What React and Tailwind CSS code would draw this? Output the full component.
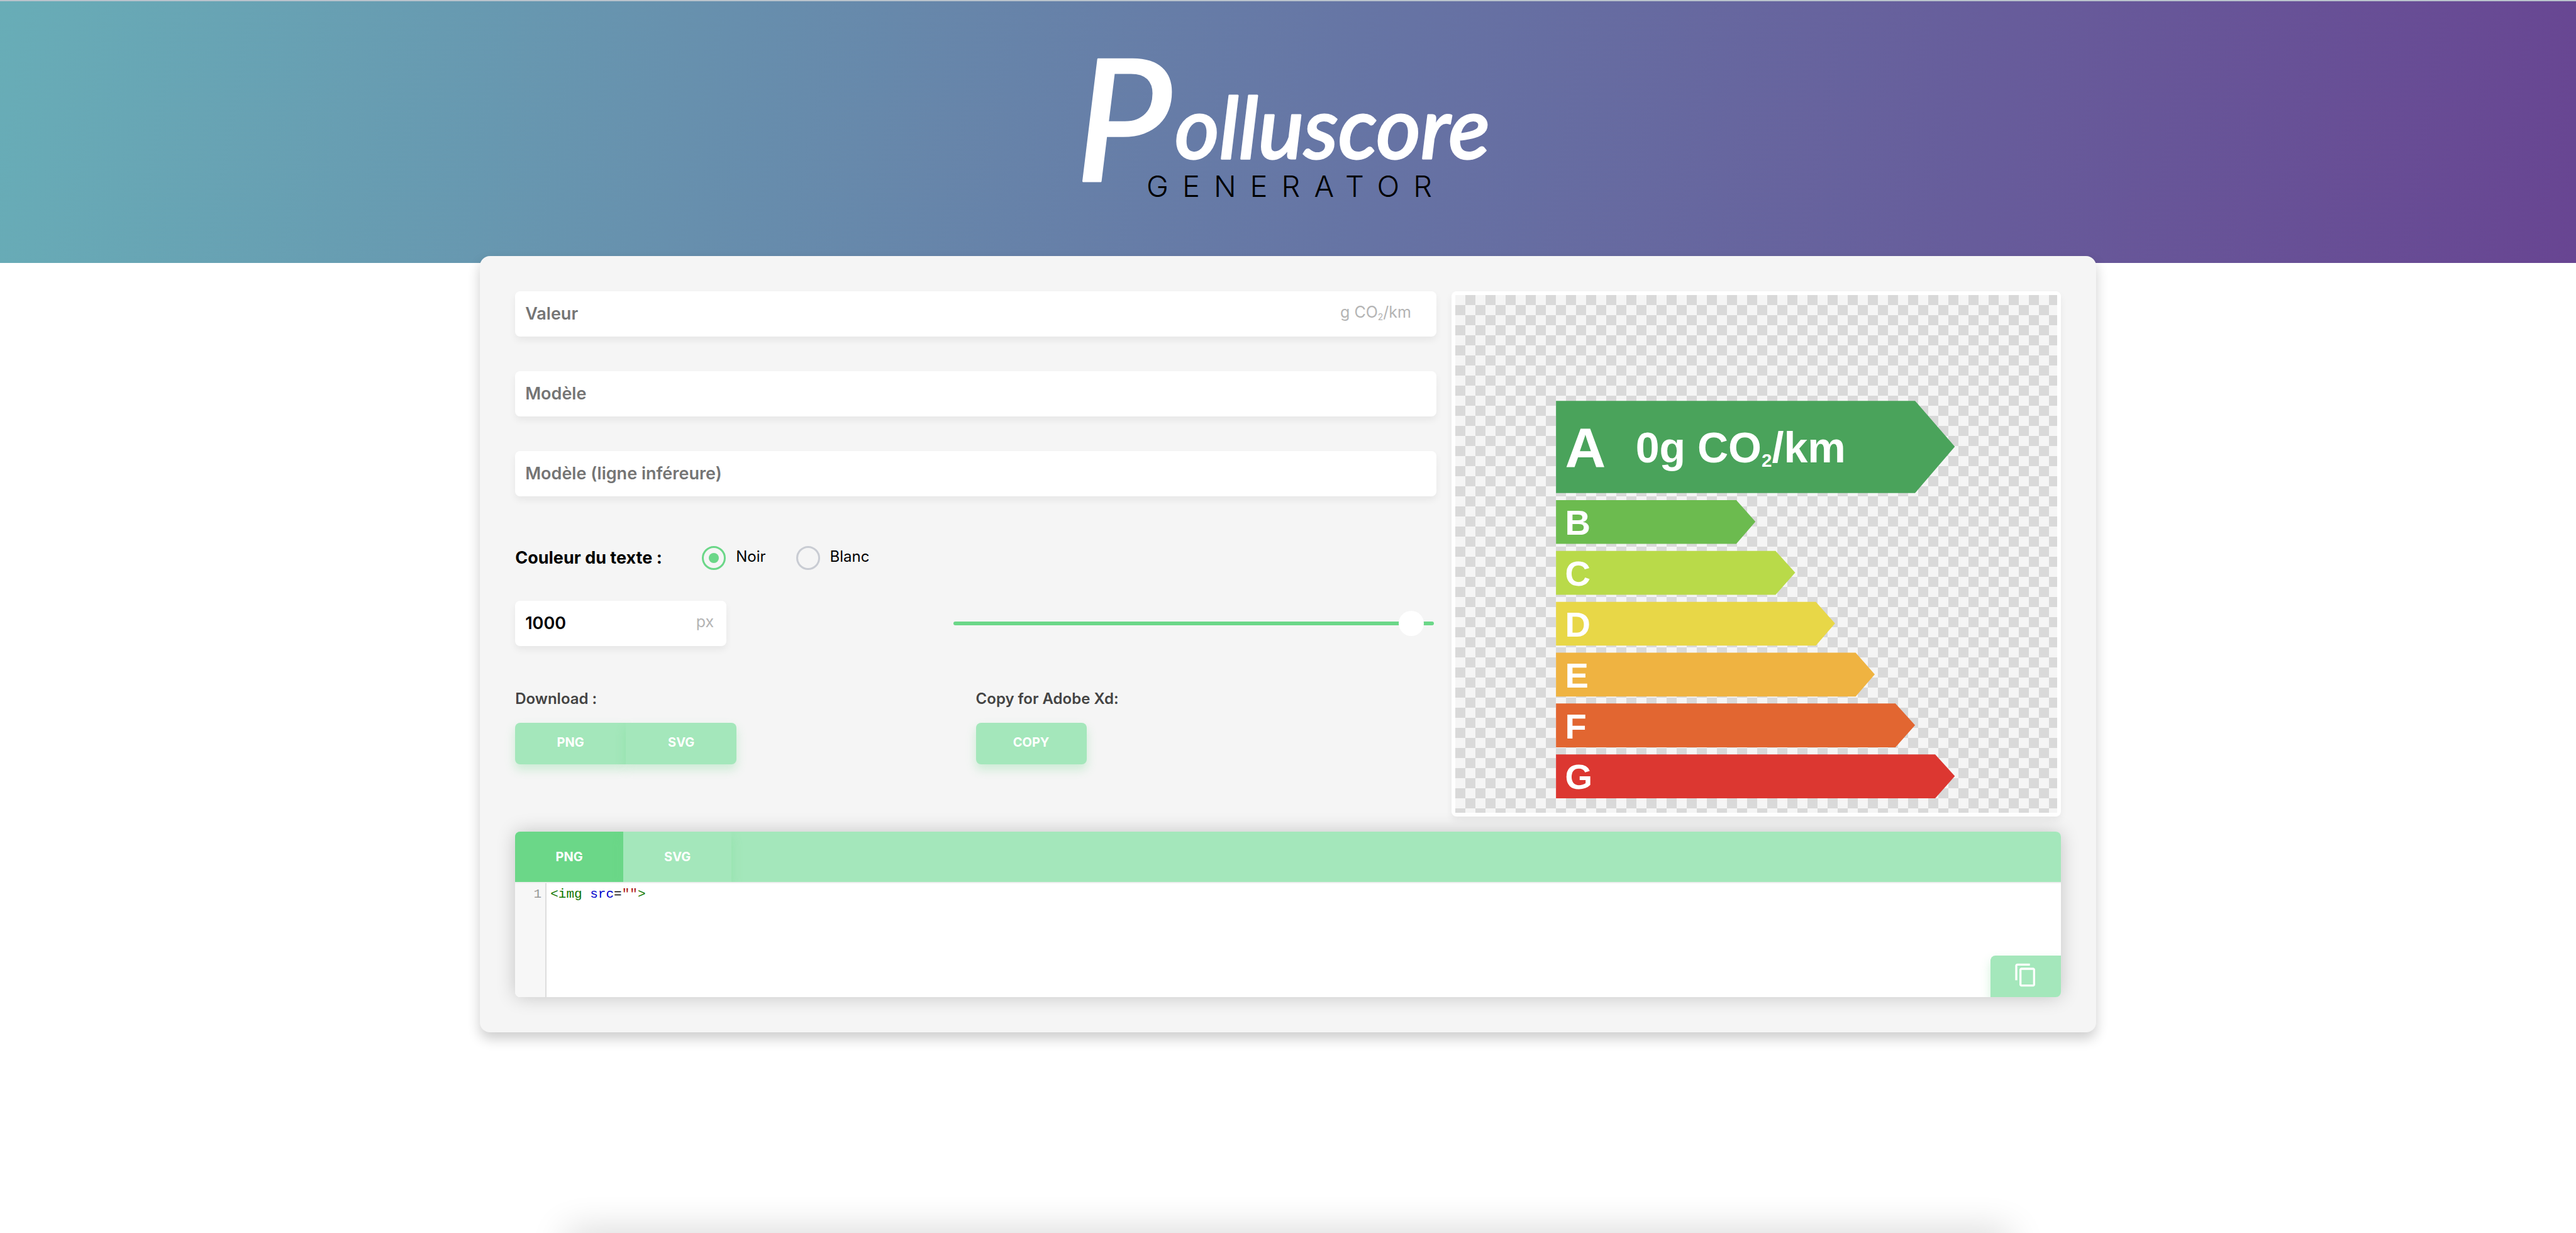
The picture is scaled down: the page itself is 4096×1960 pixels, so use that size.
import { useState } from "react";
import { MdContentCopy } from "react-icons/md";

const fieldBox =
  "flex h-[72px] items-center rounded-lg bg-white px-4 shadow-[0_6px_12px_rgba(0,0,0,0.06)]";
const fieldInput =
  "w-full min-w-0 flex-1 bg-transparent text-[27px] font-semibold text-black outline-none placeholder:text-[#757575]";
const actionButton =
  "h-[66px] w-44 bg-[#a4e7bb] pb-1 text-xl font-bold text-white shadow-[0_8px_16px_rgba(107,215,136,0.3)]";

const bars = [
  { letter: "B", y: 407, shoulder: 558, tip: 596, color: "#6cbb4f" },
  { letter: "C", y: 508, shoulder: 636, tip: 675, color: "#b9da49" },
  { letter: "D", y: 609, shoulder: 716, tip: 754, color: "#e8d747" },
  { letter: "E", y: 710, shoulder: 795, tip: 833, color: "#efb341" },
  { letter: "F", y: 811, shoulder: 874, tip: 913, color: "#e26631" },
  { letter: "G", y: 912, shoulder: 953, tip: 992, color: "#dc3731" },
];

function Logo() {
  return (
    <h1 className="flex flex-col items-center">
      <svg
        viewBox="0 0 660 232"
        className="h-[232px] w-[660px] overflow-visible"
        role="img"
        aria-label="Polluscore Generator"
      >
        <g
          fill="#fff"
          stroke="#fff"
          strokeWidth="3"
          strokeLinejoin="round"
          fontFamily="Lato, sans-serif"
          fontStyle="italic"
          fontWeight="500"
        >
          <text x="-8" y="200" fontSize="270">P</text>
          <text x="150" y="164" fontSize="136">olluscore</text>
        </g>
        <text
          x="105"
          y="225"
          fill="#000"
          fontFamily="Inter, sans-serif"
          fontSize="47"
          fontWeight="300"
          letterSpacing="22"
        >
          GENERATOR
        </text>
      </svg>
    </h1>
  );
}

function EnergyLabel() {
  return (
    <svg
      viewBox="0 0 1195 1028"
      className="block h-auto w-full"
      fontFamily="'Liberation Sans', Arial, sans-serif"
      fontWeight="700"
    >
      <polygon points="200,210 913,210 992,301 913,393 200,393" fill="#4aa35b" />
      <text x="218" y="342" fontSize="112" fill="#fff">A</text>
      <text x="358" y="332" fontSize="85" fill="#fff">
        0g CO<tspan fontSize="37" dy="9">2</tspan><tspan dy="-9">/km</tspan>
      </text>
      {bars.map((b) => (
        <g key={b.letter}>
          <polygon
            points={`200,${b.y} ${b.shoulder},${b.y} ${b.tip},${b.y + 43} ${b.shoulder},${b.y + 87} 200,${b.y + 87}`}
            fill={b.color}
          />
          <text x="218" y={b.y + 69} fontSize="70" fill="#fff">{b.letter}</text>
        </g>
      ))}
    </svg>
  );
}

function ColorChoice({ value, label, current, onChange }) {
  return (
    <label className="flex items-center gap-4 text-2xl text-black">
      <input
        type="radio"
        name="textColor"
        value={value}
        checked={current === value}
        onChange={() => onChange(value)}
        className="grid size-[38px] appearance-none place-items-center rounded-full border-3 border-[#c9ccd3] before:size-4 before:rounded-full checked:border-[#6bd788] checked:before:bg-[#6bd788]"
      />
      <span className="pb-1">{label}</span>
    </label>
  );
}

export default function App() {
  const [textColor, setTextColor] = useState("noir");
  const [size, setSize] = useState("1000");
  const [tab, setTab] = useState("png");

  return (
    <div className="relative flex min-h-screen flex-col overflow-hidden bg-white font-['Inter',sans-serif]">
      <header className="flex h-[418px] justify-center border-t-2 border-[#b9c3cc] bg-[linear-gradient(100deg,#68adb7_0%,#6673a4_54%,#684592_100%)] pt-[86px]">
        <Logo />
      </header>

      <main className="mx-auto -mt-[11px] box-content w-3/5 rounded-2xl bg-[#f5f5f5] p-14 shadow-[0_10px_20px_rgba(0,0,0,0.2)]">
        <div className="grid grid-cols-[1465fr_969fr] gap-6">
          <form className="flex flex-col" onSubmit={(e) => e.preventDefault()}>
            <div className="flex flex-col gap-[55px]">
              <div className={fieldBox}>
                <input aria-label="Valeur" placeholder="Valeur" className={fieldInput} />
                <span className="pr-6 pb-1 text-[25px] text-[#b4b4b4]">
                  g CO<sub className="text-sm">2</sub>/km
                </span>
              </div>
              <div className={fieldBox}>
                <input aria-label="Modèle" placeholder="Modèle" className={fieldInput} />
              </div>
              <div className={fieldBox}>
                <input
                  aria-label="Modèle (ligne inféreure)"
                  placeholder="Modèle (ligne inféreure)"
                  className={fieldInput}
                />
              </div>
            </div>

            <fieldset className="mt-[78px] flex items-center">
              <legend className="float-left w-[297px] text-[27px] leading-10 font-bold text-black">
                Couleur du texte :
              </legend>
              <div className="flex gap-12">
                <ColorChoice value="noir" label="Noir" current={textColor} onChange={setTextColor} />
                <ColorChoice value="blanc" label="Blanc" current={textColor} onChange={setTextColor} />
              </div>
            </fieldset>

            <div className="mt-12 flex items-center justify-between">
              <div className={`${fieldBox} w-[336px]`}>
                <input
                  aria-label="Taille"
                  value={size}
                  onChange={(e) => setSize(e.target.value)}
                  className={fieldInput}
                />
                <span className="pr-1 pb-1 text-[25px] text-[#b4b4b4]">px</span>
              </div>
              <input
                type="range"
                aria-label="Taille"
                min="0"
                max="1000"
                defaultValue="978"
                className="mr-1 h-10 w-[764px] appearance-none bg-transparent [&::-webkit-slider-runnable-track]:h-[6px] [&::-webkit-slider-runnable-track]:rounded-full [&::-webkit-slider-runnable-track]:bg-[#6bd788] [&::-webkit-slider-thumb]:-mt-[17px] [&::-webkit-slider-thumb]:size-10 [&::-webkit-slider-thumb]:appearance-none [&::-webkit-slider-thumb]:rounded-full [&::-webkit-slider-thumb]:bg-white"
              />
            </div>

            <div className="mt-[68px] grid grid-cols-2">
              <div>
                <h2 className="text-2xl leading-8 font-semibold text-[#444]">Download :</h2>
                <div className="mt-[22px] flex">
                  <button type="button" className={`${actionButton} rounded-l-lg`}>PNG</button>
                  <button type="button" className={`${actionButton} rounded-r-lg`}>SVG</button>
                </div>
              </div>
              <div>
                <h2 className="text-2xl leading-8 font-semibold text-[#444]">Copy for Adobe Xd:</h2>
                <button type="button" className={`${actionButton} mt-[22px] rounded-lg`}>COPY</button>
              </div>
            </div>
          </form>

          <section className="self-start rounded-lg bg-white p-[6px] shadow-[0_6px_12px_rgba(0,0,0,0.06)]">
            <div className="bg-[repeating-conic-gradient(#d9d9d9_0%_25%,#f5f5f5_0%_50%)] bg-size-[32px_32px]">
              <EnergyLabel />
            </div>
          </section>
        </div>

        <section className="relative mt-6 overflow-hidden rounded-lg bg-white shadow-[0_0_30px_rgba(0,0,0,0.2)]">
          <div role="tablist" className="flex h-20 overflow-hidden bg-[#a4e7bb]">
            {["png", "svg"].map((t) => (
              <button
                key={t}
                type="button"
                role="tab"
                aria-selected={tab === t}
                onClick={() => setTab(t)}
                className="w-43 bg-[#a4e7bb] text-xl font-bold text-white uppercase shadow-[0_8px_16px_rgba(107,215,136,0.3)] aria-selected:bg-[#6bd788] aria-selected:shadow-none"
              >
                {t}
              </button>
            ))}
          </div>
          <div className="flex h-[183px] border-t-2 border-[#eee] font-['Liberation_Mono',monospace] text-[21px] leading-7">
            <div className="w-[50px] border-r-2 border-[#ddd] bg-[#f7f7f7] pt-1 pr-[6px] text-right text-[#999]">
              1
            </div>
            <code className="pt-1 pl-[6px] font-['Liberation_Mono',monospace] text-black">
              <span className="text-[#170]">&lt;img</span> <span className="text-[#00c]">src</span>=
              <span className="text-[#a11]">""</span>
              <span className="text-[#170]">&gt;</span>
            </code>
          </div>
          <button
            type="button"
            aria-label="Copier"
            className="absolute right-0 bottom-0 grid h-[66px] w-[112px] place-items-center rounded-tl-lg bg-[#a4e7bb] pb-1 text-[40px] text-white shadow-[0_8px_16px_rgba(107,215,136,0.3)]"
          >
            <MdContentCopy />
          </button>
        </section>
      </main>

      <div className="absolute inset-x-[22%] -bottom-10 h-10 rounded-lg shadow-[0_0_60px_rgba(0,0,0,0.2)]" />
    </div>
  );
}
